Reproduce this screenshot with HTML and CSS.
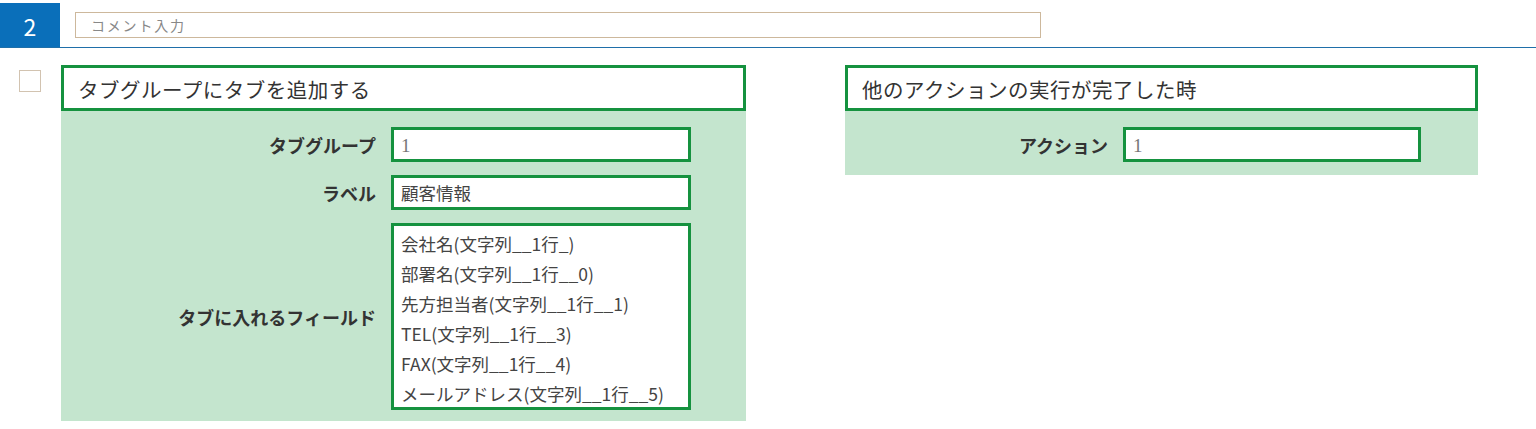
FILE: index.html
```html
<!DOCTYPE html>
<html lang="ja">
<head>
<meta charset="utf-8">
<link rel="stylesheet" href="styles.css">
</head>
<body>
<header class="head">
  <div class="num">2</div>
  <div class="comment">コメント入力</div>
</header>
<main class="main">
  <div class="check"></div>
  <section class="card card-left">
    <div class="title">タブグループにタブを追加する</div>
    <div class="panel">
      <div class="row">
        <div class="label">タブグループ</div>
        <div class="field"><span class="num-val">1</span></div>
      </div>
      <div class="row">
        <div class="label">ラベル</div>
        <div class="field">顧客情報</div>
      </div>
      <div class="row">
        <div class="label">タブに入れるフィールド</div>
        <div class="field list">
          <div class="item">会社名(文字列__1行_)</div>
          <div class="item">部署名(文字列__1行__0)</div>
          <div class="item">先方担当者(文字列__1行__1)</div>
          <div class="item">TEL(文字列__1行__3)</div>
          <div class="item">FAX(文字列__1行__4)</div>
          <div class="item">メールアドレス(文字列__1行__5)</div>
        </div>
      </div>
    </div>
  </section>
  <section class="card card-right">
    <div class="title">他のアクションの実行が完了した時</div>
    <div class="panel panel-right">
      <div class="row row-right">
        <div class="label">アクション</div>
        <div class="field"><span class="num-val">1</span></div>
      </div>
    </div>
  </section>
</main>
</body>
</html>
```

FILE: styles.css
```css
* { box-sizing: border-box; }
html, body { margin: 0; padding: 0; background: #fff; }
body {
  font-family: "Noto Sans CJK JP", "Noto Sans", sans-serif;
  color: #333;
  width: 1536px;
}
.head {
  display: flex;
  align-items: flex-start;
  padding-top: 3px;
  height: 48px;
  border-bottom: 1px solid #1f6fa9;
}
.num {
  width: 60px;
  height: 44px;
  background: #0a6fba;
  color: #fff;
  font-size: 23px;
  line-height: 46px;
  text-align: center;
}
.comment {
  margin-left: 15px;
  margin-top: 9px;
  width: 966px;
  height: 26px;
  border: 1px solid #cdb89c;
  color: #888;
  font-size: 14px;
  line-height: 25px;
  padding-left: 15px;
  letter-spacing: 1.8px;
}
.main {
  display: flex;
  align-items: flex-start;
  padding-top: 17px;
}
.check {
  width: 22px;
  height: 22px;
  border: 1px solid #d2c3b0;
  margin-left: 19px;
  margin-top: 5px;
}
.card-left { width: 685px; margin-left: 20px; }
.card-right { width: 633px; margin-left: 99px; }
.title {
  height: 46px;
  border: 3px solid #15923f;
  background: #fff;
  font-size: 20.5px;
  line-height: 43px;
  padding-left: 14px;
  color: #333;
  letter-spacing: 0.5px;
}
.panel {
  background: #c4e5ce;
  padding: 16px 0 11px 0;
  display: flex;
  flex-direction: column;
  gap: 13px;
}
.panel-right { padding-bottom: 13px; }
.row {
  display: grid;
  grid-template-columns: 315px 300px;
  column-gap: 15px;
  align-items: center;
}
.row-right { grid-template-columns: 263px 298px; }
.label {
  text-align: right;
  font-weight: bold;
  font-size: 18px;
  color: #333;
}
.field {
  height: 35px;
  border: 3px solid #15923f;
  background: #fff;
  font-size: 17.5px;
  line-height: 30px;
  padding-left: 7px;
  color: #444;
}
.num-val {
  font-family: "Liberation Serif", "DejaVu Serif", serif;
  color: #777;
  font-size: 19px;
}
.list {
  height: 187px;
  padding-top: 3px;
}
.item {
  line-height: 30px;
  height: 30px;
  font-size: 17.5px;
  color: #444;
  white-space: nowrap;
}
```
